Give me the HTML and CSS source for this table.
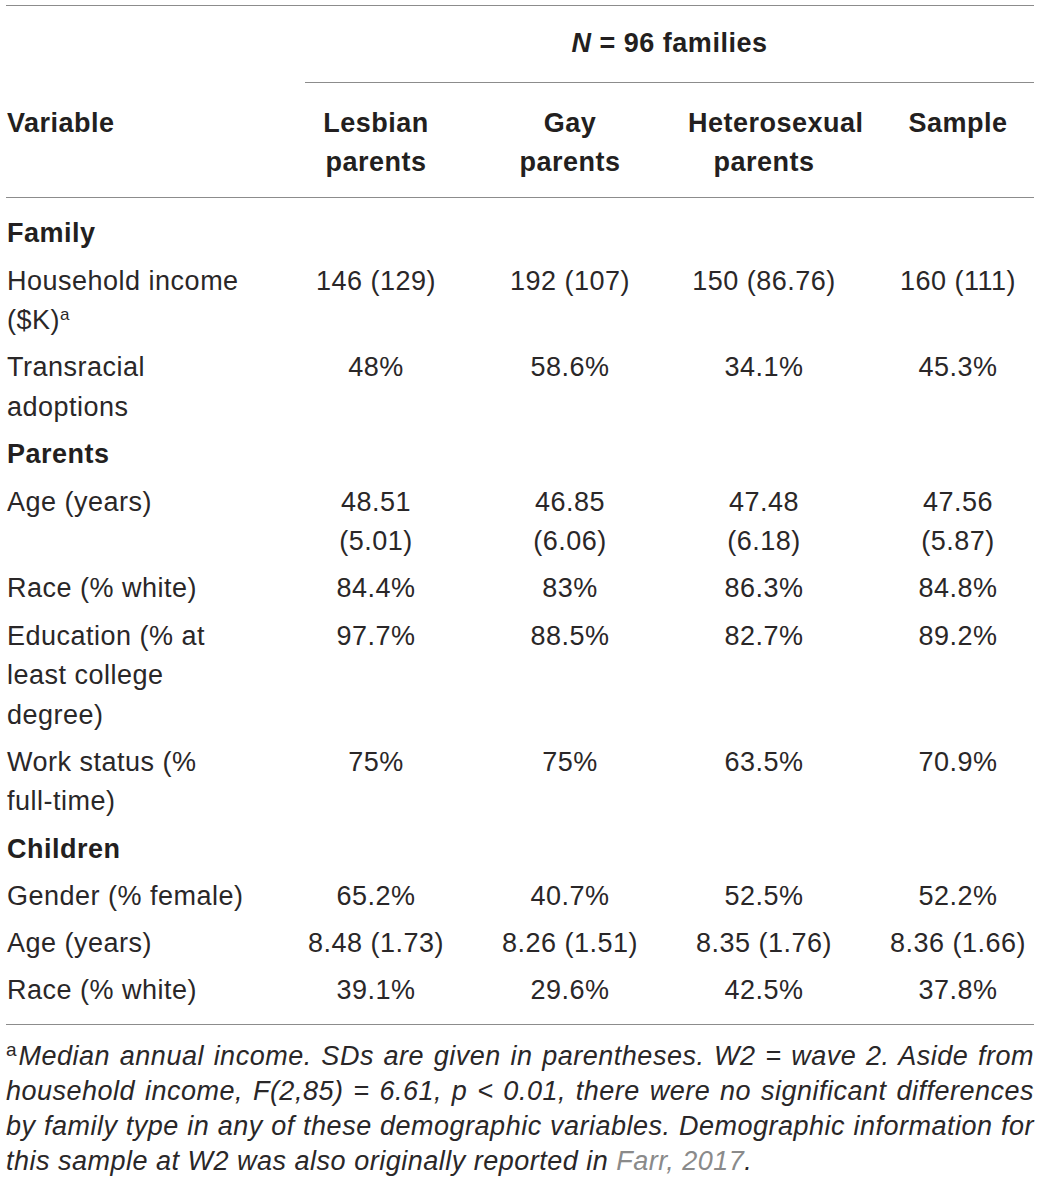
FILE: index.html
```html
<!DOCTYPE html>
<html lang="en">
<head>
<meta charset="utf-8">
<title>Demographics table</title>
<link rel="stylesheet" href="styles.css">
</head>
<body>
<div class="table">
  <div class="head">
    <div class="row span-row">
      <div class="var"></div>
      <div class="span-cell"><span class="span-text"><i>N</i> = 96 families</span></div>
    </div>
    <div class="row col-row">
      <div class="var">Variable</div>
      <div class="dat">Lesbian<br>parents</div>
      <div class="dat">Gay<br>parents</div>
      <div class="dat">Heterosexual<br>parents</div>
      <div class="dat">Sample</div>
    </div>
  </div>
  <div class="body">
    <div class="group">Family</div>
    <div class="row">
      <div class="var">Household income<br>($K)<sup>a</sup></div>
      <div class="dat">146 (129)</div>
      <div class="dat">192 (107)</div>
      <div class="dat">150 (86.76)</div>
      <div class="dat">160 (111)</div>
    </div>
    <div class="row">
      <div class="var">Transracial<br>adoptions</div>
      <div class="dat">48%</div>
      <div class="dat">58.6%</div>
      <div class="dat">34.1%</div>
      <div class="dat">45.3%</div>
    </div>
    <div class="group">Parents</div>
    <div class="row">
      <div class="var">Age (years)</div>
      <div class="dat">48.51<br>(5.01)</div>
      <div class="dat">46.85<br>(6.06)</div>
      <div class="dat">47.48<br>(6.18)</div>
      <div class="dat">47.56<br>(5.87)</div>
    </div>
    <div class="row">
      <div class="var">Race (% white)</div>
      <div class="dat">84.4%</div>
      <div class="dat">83%</div>
      <div class="dat">86.3%</div>
      <div class="dat">84.8%</div>
    </div>
    <div class="row">
      <div class="var">Education (% at<br>least college<br>degree)</div>
      <div class="dat">97.7%</div>
      <div class="dat">88.5%</div>
      <div class="dat">82.7%</div>
      <div class="dat">89.2%</div>
    </div>
    <div class="row">
      <div class="var">Work status (%<br>full-time)</div>
      <div class="dat">75%</div>
      <div class="dat">75%</div>
      <div class="dat">63.5%</div>
      <div class="dat">70.9%</div>
    </div>
    <div class="group">Children</div>
    <div class="row">
      <div class="var">Gender (% female)</div>
      <div class="dat">65.2%</div>
      <div class="dat">40.7%</div>
      <div class="dat">52.5%</div>
      <div class="dat">52.2%</div>
    </div>
    <div class="row">
      <div class="var">Age (years)</div>
      <div class="dat">8.48 (1.73)</div>
      <div class="dat">8.26 (1.51)</div>
      <div class="dat">8.35 (1.76)</div>
      <div class="dat">8.36 (1.66)</div>
    </div>
    <div class="row">
      <div class="var">Race (% white)</div>
      <div class="dat">39.1%</div>
      <div class="dat">29.6%</div>
      <div class="dat">42.5%</div>
      <div class="dat">37.8%</div>
    </div>
  </div>
  <div class="note">
    <span class="line"><sup class="fn">a</sup>Median annual income. SDs are given in parentheses. W2 = wave 2. Aside from</span>
    <span class="line">household income, F(2,85) = 6.61, p &lt; 0.01, there were no significant differences</span>
    <span class="line">by family type in any of these demographic variables. Demographic information for</span>
    <span class="line last">this sample at W2 was also originally reported in <span class="ref">Farr, 2017</span>.</span>
  </div>
</div>
</body>
</html>
```
FILE: styles.css
```css
html, body {
  margin: 0;
  padding: 0;
  background: #ffffff;
}

body {
  font-family: "Liberation Sans", Arial, sans-serif;
  color: #2a2728;
  font-size: 27px;
  letter-spacing: 0.5px;
  line-height: 39.5px;
}

.table {
  width: 1028px;
  margin: 5px 0 0 6px;
  border-top: 1px solid #8c8c8c;
}

.row {
  display: grid;
  grid-template-columns: 252px repeat(4, 152px);
  column-gap: 42px;
}

.var {
  padding-left: 1px;
  text-align: left;
}

.dat {
  text-align: center;
  white-space: nowrap;
}

.head {
  font-weight: bold;
  color: #231f20;
  border-bottom: 1px solid #8c8c8c;
}

.span-row {
  padding-top: 18px;
}

.span-cell {
  grid-column: 2 / 6;
  text-align: center;
  padding-bottom: 18px;
  margin-left: 5px;
  border-bottom: 1px solid #8c8c8c;
}

.col-row {
  padding: 21px 0 14px;
}

.col-row .dat {
  white-space: normal;
}

.body {
  padding: 13px 0 9px;
  border-bottom: 1px solid #8c8c8c;
}

.body .row {
  padding: 3.9px 0;
}

.group {
  font-weight: bold;
  color: #231f20;
  padding: 3.9px 0 3.9px 1px;
}

sup {
  font-size: 17px;
  line-height: 0;
  vertical-align: 9px;
  letter-spacing: 0;
}

.note {
  padding-top: 14px;
  font-style: italic;
  line-height: 35px;
}

.note .line {
  display: block;
  text-align: justify;
  text-align-last: justify;
  white-space: nowrap;
}

.note .line.last {
  text-align-last: left;
}

.fn {
  font-style: normal;
  font-size: 19px;
  margin-right: 2px;
}

.ref {
  color: #8a8a8a;
}
```
